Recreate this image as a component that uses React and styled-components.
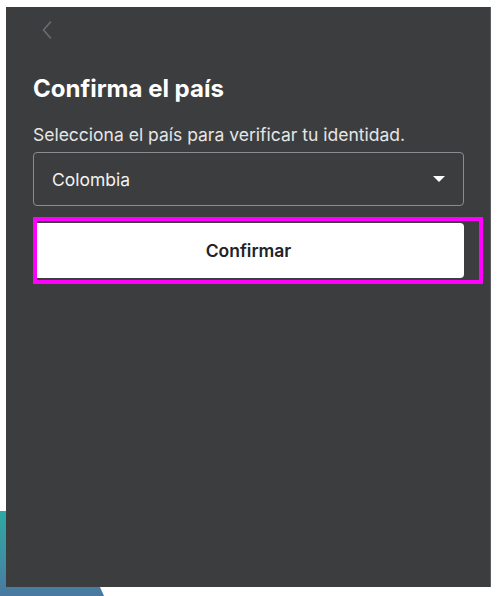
import styled, { createGlobalStyle } from "styled-components";

const GlobalStyle = createGlobalStyle`
  html, body {
    margin: 0;
    padding: 0;
    background: #ffffff;
  }
  body {
    font-family: Inter, "Open Sans", "Liberation Sans", sans-serif;
  }
`;

const Page = styled.div`
  position: relative;
  width: 501px;
  height: 596px;
  overflow: hidden;
  background: #ffffff;
`;

// decorative shape peeking out from behind the panel
const Decor = styled.div`
  position: absolute;
  left: 0;
  top: 511px;
  width: 110px;
  height: 85px;
  background: linear-gradient(180deg, #2fa9a3 0%, #3f8ea3 60%, #4a78a0 100%);
  clip-path: polygon(0 0, 66px 0, 104px 100%, 0 100%);
`;

const Panel = styled.div`
  position: relative;
  margin: 7px 0 0 6px;
  width: 485px;
  height: 580px;
  background: #3c3d3f;
  border-right: 1px solid #5c5d60;
  box-sizing: border-box;
  padding: 11px 26px 0 27px;
  display: flex;
  flex-direction: column;
`;

const BackButton = styled.button`
  width: 24px;
  height: 24px;
  padding: 0;
  margin: 0 0 0 2px;
  border: none;
  background: none;
  display: flex;
  align-items: center;
  justify-content: center;
  cursor: pointer;
`;

const Title = styled.h1`
  margin: 32px 0 0;
  font-size: 24px;
  line-height: 30px;
  font-weight: 700;
  color: #ffffff;
`;

const Label = styled.p`
  margin: 20px 0 0;
  font-size: 17.5px;
  line-height: 22px;
  color: #e6e6e6;
`;

const Select = styled.div`
  margin-top: 6px;
  height: 54px;
  box-sizing: border-box;
  border: 1px solid #8b8c90;
  border-radius: 4px;
  display: flex;
  align-items: center;
  justify-content: space-between;
  padding: 0 18px 0 18px;
  color: #f2f2f2;
  font-size: 17.5px;
`;

const Caret = styled.span`
  width: 0;
  height: 0;
  border-left: 6px solid transparent;
  border-right: 6px solid transparent;
  border-top: 6px solid #ffffff;
`;

const ButtonWrap = styled.div`
  position: relative;
  margin-top: 17px;
`;

const PrimaryButton = styled.button`
  width: 100%;
  height: 55px;
  border: none;
  border-radius: 4px;
  background: #ffffff;
  color: #222326;
  font-family: inherit;
  font-size: 17.5px;
  font-weight: 600;
  cursor: pointer;
`;

// highlight overlay drawn on top of the button
const Highlight = styled.div`
  position: absolute;
  left: 0;
  top: -6px;
  width: 450px;
  height: 67px;
  box-sizing: border-box;
  border: 4px solid #ff00ff;
  pointer-events: none;
`;

export default function App() {
  return (
    <>
      <GlobalStyle />
      <Page>
        <Decor />
        <Panel>
          <BackButton aria-label="Volver">
            <svg width="10" height="18" viewBox="0 0 10 18">
              <path
                d="M8.5 1 L1.5 9 L8.5 17"
                fill="none"
                stroke="#6c6d74"
                strokeWidth="1.6"
                strokeLinecap="round"
                strokeLinejoin="round"
              />
            </svg>
          </BackButton>
          <Title>Confirma el país</Title>
          <Label>Selecciona el país para verificar tu identidad.</Label>
          <Select>
            <span>Colombia</span>
            <Caret />
          </Select>
          <ButtonWrap>
            <PrimaryButton>Confirmar</PrimaryButton>
            <Highlight />
          </ButtonWrap>
        </Panel>
      </Page>
    </>
  );
}
